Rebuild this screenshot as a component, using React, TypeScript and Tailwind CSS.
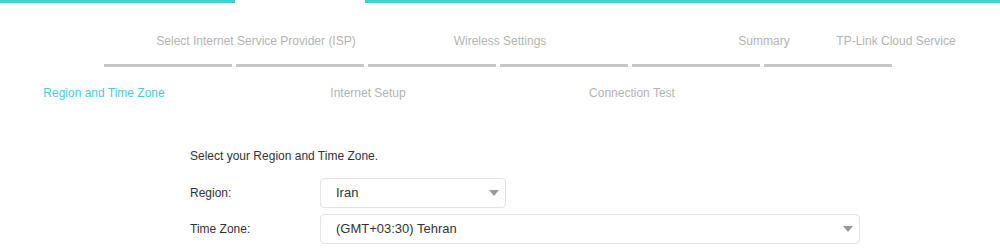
import React from 'react';

const topLabels = ['', 'Select Internet Service Provider (ISP)', '', 'Wireless Settings', '', 'Summary', 'TP-Link Cloud Service'];
const bottomLabels = ['Region and Time Zone', '', 'Internet Setup', '', 'Connection Test', '', ''];

const Caret = () => (
  <svg width="10" height="6" viewBox="0 0 10 6" className="shrink-0">
    <path d="M0 0 L10 0 L5 6 Z" fill="#9a9a9a" />
  </svg>
);

const SelectBox = ({ value, width }: { value: string; width: string }) => (
  <div className={`${width} h-[30px] flex items-center justify-between pl-[15px] pr-[6px] border border-[#e3e3e3] rounded-[4px] bg-white text-[13px] text-[#333]`}>
    <span>{value}</span>
    <Caret />
  </div>
);

export default function App() {
  return (
    <div className="w-[1000px] h-[248px] bg-white overflow-hidden" style={{ fontFamily: '"Liberation Sans", Arial, sans-serif' }}>
      {/* top progress line */}
      <div className="flex h-[3px]">
        <div className="w-[235px] bg-[#4acbd6]" />
        <div className="w-[130px]" />
        <div className="flex-1 bg-[#4acbd6]" />
      </div>

      {/* step labels above */}
      <div className="flex ml-[38px] mt-[30px] h-[16px] text-[12px] leading-[16px] text-[#b3b3b3]">
        {topLabels.map((l, i) => (
          <div key={i} className={`w-[132px] shrink-0 flex justify-center whitespace-nowrap ${i === 1 ? 'pl-[40px]' : ''}`}>
            {l}
          </div>
        ))}
      </div>

      {/* step bars */}
      <div className="flex gap-1 ml-[104px] mt-[15px]">
        {[0, 1, 2, 3, 4, 5].map((i) => (
          <div key={i} className="w-[128px] h-[3px] bg-[#c6c6c8]" />
        ))}
      </div>

      {/* step labels below */}
      <div className="flex ml-[38px] mt-[18px] h-[16px] text-[12px] leading-[16px] text-[#b3b3b3]">
        {bottomLabels.map((l, i) => (
          <div key={i} className={`w-[132px] shrink-0 flex justify-center whitespace-nowrap ${i === 0 ? 'text-[#4acbd6]' : ''}`}>
            {l}
          </div>
        ))}
      </div>

      {/* form */}
      <div className="ml-[190px] mt-[47px] text-[12px] text-[#333]">
        <div className="leading-[16px]">Select your Region and Time Zone.</div>
        <div className="flex items-center mt-[14px]">
          <div className="w-[130px]">Region:</div>
          <SelectBox value="Iran" width="w-[186px]" />
        </div>
        <div className="flex items-center mt-[6px]">
          <div className="w-[130px]">Time Zone:</div>
          <SelectBox value="(GMT+03:30) Tehran" width="w-[540px]" />
        </div>
      </div>
    </div>
  );
}
